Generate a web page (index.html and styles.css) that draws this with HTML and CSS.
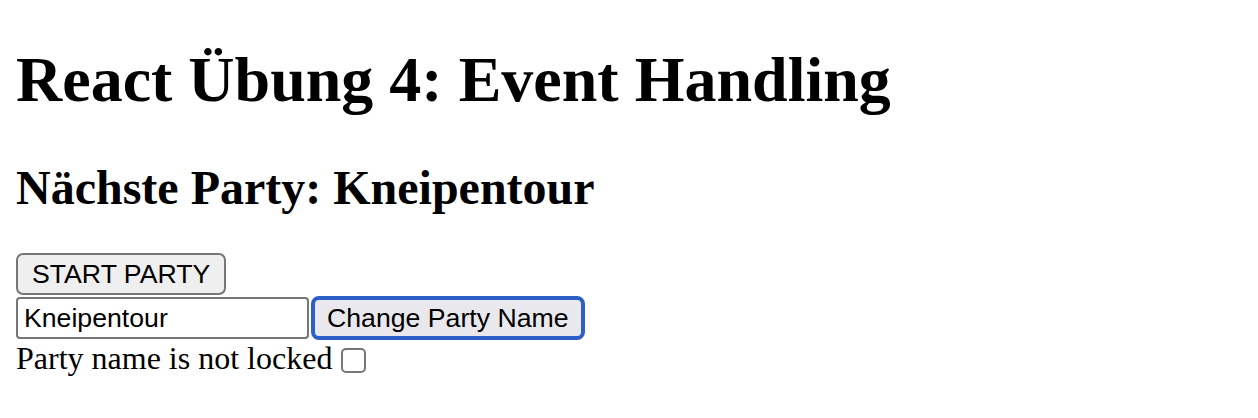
FILE: index.html
```html
<!DOCTYPE html>
<html lang="de">
<head>
<meta charset="utf-8">
<title>React Übung 4</title>
<link rel="stylesheet" href="styles.css">
</head>
<body>
<h1 class="title">React Übung 4: Event Handling</h1>
<h2 class="subtitle">Nächste Party: Kneipentour</h2>
<div class="controls">
  <div class="row"><button class="btn btn-start">START PARTY</button></div>
  <div class="row row-gap">
    <input class="field" type="text" value="Kneipentour">
    <button class="btn btn-focus">Change Party Name</button>
  </div>
  <div class="row lock">
    <span class="lock-label">Party name is not locked</span>
    <span class="check"></span>
  </div>
</div>
</body>
</html>
```

FILE: styles.css
```css
html, body {
  margin: 0;
  padding: 0;
  background: #ffffff;
}
body {
  padding: 0 16px;
  font-family: "Liberation Serif", "Times New Roman", serif;
  color: #000;
}
.title {
  margin: 0;
  padding-top: 43px;
  font-size: 64px;
  line-height: 74px;
  font-weight: bold;
}
.subtitle {
  margin: 43px 0 0 0;
  font-size: 48px;
  line-height: 55px;
  font-weight: bold;
}
.controls {
  margin-top: 38px;
  display: flex;
  flex-direction: column;
  align-items: flex-start;
}
.row {
  display: flex;
  align-items: center;
}
.row-gap {
  gap: 2px;
  margin-top: 1px;
}
.btn {
  box-sizing: border-box;
  height: 42px;
  margin: 0;
  padding: 0 12px;
  white-space: nowrap;
  font-family: "Liberation Sans", Arial, sans-serif;
  font-size: 26.67px;
  color: #000;
  background: #efefef;
  border: 2px solid #767676;
  border-radius: 7px;
}
.btn-start {
  padding: 0 14px;
}
.btn-focus {
  border: 4px solid #2c60c8;
  border-radius: 8px;
  background: #e9e9ed;
  height: 44px;
  padding: 0 12px;
}
.field {
  box-sizing: border-box;
  width: 293px;
  height: 42px;
  margin: 0;
  padding: 2px 6px;
  font-family: "Liberation Sans", Arial, sans-serif;
  font-size: 26.67px;
  color: #000;
  background: #fff;
  border: 2px solid #767676;
  border-radius: 4px;
}
.lock {
  height: 37px;
  align-items: flex-end;
}
.lock-label {
  font-size: 32px;
  line-height: 37px;
}
.check {
  box-sizing: border-box;
  width: 25px;
  height: 25px;
  margin: 0 0 4px 9px;
  border: 2px solid #767676;
  border-radius: 5px;
  background: #fff;
}
```
